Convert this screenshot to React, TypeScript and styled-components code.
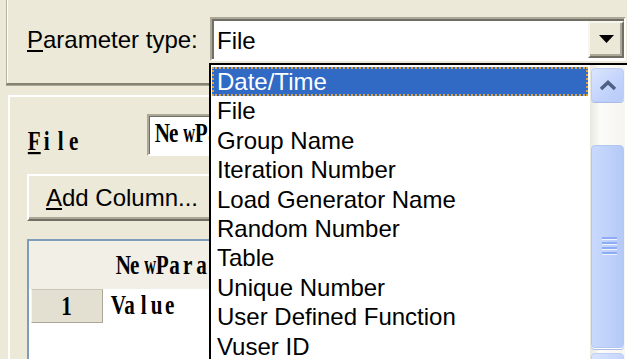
import React from "react";
import styled, { createGlobalStyle } from "styled-components";

const paramTypes = [
  "Date/Time",
  "File",
  "Group Name",
  "Iteration Number",
  "Load Generator Name",
  "Random Number",
  "Table",
  "Unique Number",
  "User Defined Function",
  "Vuser ID",
  "XML",
];

// fixed-pitch serif text (the dialog uses a CJK system font for these fields)
const Mono = ({ text, accel }: { text: string; accel?: boolean }) => (
  <MonoText>
    {text.split("").map((ch, i) => (
      <MonoChar key={i} $accel={accel && i === 0} $wide={ch === "w" || ch === "m"}>
        {ch}
      </MonoChar>
    ))}
  </MonoText>
);

function App() {
  const selected = "Date/Time";

  return (
    <Window>
      <GlobalStyle />
      <TopPanel>
        <Label>
          <Accel>P</Accel>arameter type:
        </Label>
        <Combo>
          <ComboValue>File</ComboValue>
          <DropButton>
            <svg width="15" height="8" viewBox="0 0 15 8">
              <polygon points="0,0 15,0 7.5,8" fill="#000" />
            </svg>
          </DropButton>
        </Combo>
      </TopPanel>

      <BottomPanel>
        <FileRow>
          <FieldLabel>
            <Mono text="File" accel />
          </FieldLabel>
          <TextField>
            <Mono text="NewParam1" />
          </TextField>
        </FileRow>
        <Button>
          <Accel>A</Accel>dd Column...
        </Button>
        <Grid>
          <GridHeader>
            <Mono text="NewParam" />
          </GridHeader>
          <GridRow>
            <RowHeader>
              <Mono text="1" />
            </RowHeader>
            <Cell>
              <Mono text="Value" />
            </Cell>
          </GridRow>
        </Grid>
      </BottomPanel>

      <DropList>
        <Items>
          {paramTypes.map((t) => (
            <Item key={t} $selected={t === selected}>
              {t}
            </Item>
          ))}
        </Items>
        <ScrollBar>
          <ScrollButton>
            <svg width="18" height="11" viewBox="0 0 18 11">
              <path
                d="M2 9 L9 2.5 L16 9"
                fill="none"
                stroke="#4d6185"
                strokeWidth="3.5"
              />
            </svg>
          </ScrollButton>
          <Thumb>
            <svg width="15" height="19" viewBox="0 0 15 19">
              {[0, 5, 10, 15].map((y) => (
                <g key={y}>
                  <rect x="0" y={y} width="15" height="2" fill="#8cadf5" />
                  <rect x="0" y={y + 2} width="15" height="1" fill="#eef3ff" />
                </g>
              ))}
            </svg>
          </Thumb>
          <ScrollButton />
        </ScrollBar>
      </DropList>
    </Window>
  );
}

const GlobalStyle = createGlobalStyle`
  html, body {
    margin: 0;
    padding: 0;
    background: #ece9d8;
  }
  body {
    font-family: "Liberation Sans", Arial, sans-serif;
    font-size: 24px;
    color: #000;
  }
`;

const Window = styled.div`
  position: relative;
  width: 627px;
  height: 359px;
  overflow: hidden;
  background: #ece9d8;
`;

const Accel = styled.span`
  text-decoration: underline;
  text-underline-offset: 2px;
`;

const TopPanel = styled.div`
  margin-left: 6px;
  height: 66px;
  padding: 17px 0 0 20px;
  display: grid;
  grid-template-columns: 183px 416px;
  align-items: start;
  border-left: 1px solid #b5b2a2;
  border-bottom: 2px solid #85826f;
  box-shadow: inset 1px 0 0 #fff, 0 1px 0 #aca899;
`;

const Label = styled.div`
  line-height: 29px;
  margin-top: 8px;
  white-space: nowrap;
`;

const Combo = styled.div`
  box-sizing: border-box;
  height: 44px;
  display: flex;
  align-items: center;
  padding-left: 5px;
  background: #fff;
  border: 2px solid;
  border-color: #aca899 #fff #fff #aca899;
  box-shadow: inset 2px 2px 0 #716f64;
`;

const ComboValue = styled.span`
  line-height: 29px;
  padding-top: 2px;
`;

const DropButton = styled.div`
  margin-left: auto;
  box-sizing: border-box;
  width: 36px;
  height: 37px;
  display: flex;
  align-items: center;
  justify-content: center;
  background: #ece9d8;
  border: 2px solid;
  border-color: #f6f5ef #716f64 #716f64 #f6f5ef;
  box-shadow: inset -2px -2px 0 #aca899;
`;

const BottomPanel = styled.div`
  margin: 10px 0 0 8px;
  padding: 17px 0 0 17px;
  border-top: 2px solid #fff;
  border-left: 2px solid #fff;
  display: flex;
  flex-direction: column;
  align-items: flex-start;
`;

const MonoText = styled.span`
  display: inline-flex;
  font-family: "Liberation Serif", "Times New Roman", serif;
  font-weight: bold;
  font-size: 24px;
  line-height: 26px;
  white-space: nowrap;
`;

const MonoChar = styled.span<{ $accel?: boolean; $wide?: boolean }>`
  display: inline-block;
  width: 13.3px;
  text-align: center;
  transform: ${(p) => (p.$wide ? "scale(0.68, 1.1)" : "scale(0.88, 1.1)")};
  text-decoration: ${(p) => (p.$accel ? "underline" : "none")};
  text-underline-offset: 2px;
`;

const FileRow = styled.div`
  display: flex;
  height: 42px;
`;

const FieldLabel = styled.div`
  width: 120px;
  padding-top: 13px;
`;

const TextField = styled.div`
  box-sizing: border-box;
  width: 300px;
  height: 42px;
  padding: 3px 0 0 5px;
  background: #fff;
  border: 2px solid;
  border-color: #aca899 #fff #fff #aca899;
  box-shadow: inset 1px 1px 0 #716f64;
`;

const Button = styled.div`
  margin-top: 18px;
  box-sizing: border-box;
  width: 190px;
  height: 47px;
  display: flex;
  align-items: center;
  justify-content: center;
  white-space: nowrap;
  background: #ece9d8;
  border: 2px solid;
  border-color: #fff #716f64 #716f64 #fff;
  box-shadow: inset -2px -2px 0 #aca899;
`;

const Grid = styled.div`
  margin-top: 18px;
  width: 420px;
  height: 200px;
  background: #fff;
  border: 2px solid #7f9db9;
`;

const GridHeader = styled.div`
  height: 48px;
  display: flex;
  align-items: center;
  padding-left: 86px;
  background: #f1efe6;
`;

const GridRow = styled.div`
  display: flex;
  height: 34px;
  padding-left: 2px;
`;

const RowHeader = styled.div`
  box-sizing: border-box;
  width: 72px;
  display: flex;
  align-items: center;
  justify-content: center;
  background: #e3e0d2;
  border: 1px solid #aca899;
  border-left-color: #f4f3ec;
  border-top-color: #c9c6b6;
`;

const Cell = styled.div`
  flex: 1;
  padding: 2px 0 0 7px;
`;

const DropList = styled.div`
  position: absolute;
  left: 209px;
  top: 63px;
  width: 416px;
  height: 330px;
  display: flex;
  background: #fff;
  border: 2px solid #000;
`;

const Items = styled.div`
  box-sizing: border-box;
  width: 379px;
  padding: 2px 2px 0 1px;
`;

const Item = styled.div<{ $selected?: boolean }>`
  height: 29.4px;
  line-height: 29.4px;
  padding-left: 5px;
  white-space: nowrap;
  color: ${(p) => (p.$selected ? "#fff" : "#000")};
  background: ${(p) => (p.$selected ? "#316ac5" : "transparent")};
  outline: ${(p) => (p.$selected ? "2px dotted #d9a441" : "none")};
  outline-offset: -2px;
`;

const ScrollBar = styled.div`
  box-sizing: border-box;
  width: 35px;
  padding: 3px 1px 0 1px;
  display: flex;
  flex-direction: column;
  background: linear-gradient(to right, #e9e8df, #fbfbf8 30%, #f6f5f0);
`;

const ScrollButton = styled.div`
  box-sizing: border-box;
  height: 34px;
  flex-shrink: 0;
  display: flex;
  align-items: center;
  justify-content: center;
  border: 1px solid #bccdf7;
  border-radius: 4px;
  background: linear-gradient(135deg, #dbe5fe, #c2d3fb 60%, #b7cbf8);
  box-shadow: 0 1px 0 #a9bbe6;
`;

const Thumb = styled.div`
  box-sizing: border-box;
  height: 203px;
  flex-shrink: 0;
  margin: 43px 0 5px 0;
  display: flex;
  align-items: center;
  justify-content: center;
  padding-left: 3px;
  border: 1px solid #b3c6f4;
  border-radius: 4px;
  background: linear-gradient(to right, #c9d9fd, #c1d3fb 45%, #b5c9f7);
  box-shadow: 0 1px 0 #fff, 0 2px 0 #a9bbe6;
`;

export default App;
